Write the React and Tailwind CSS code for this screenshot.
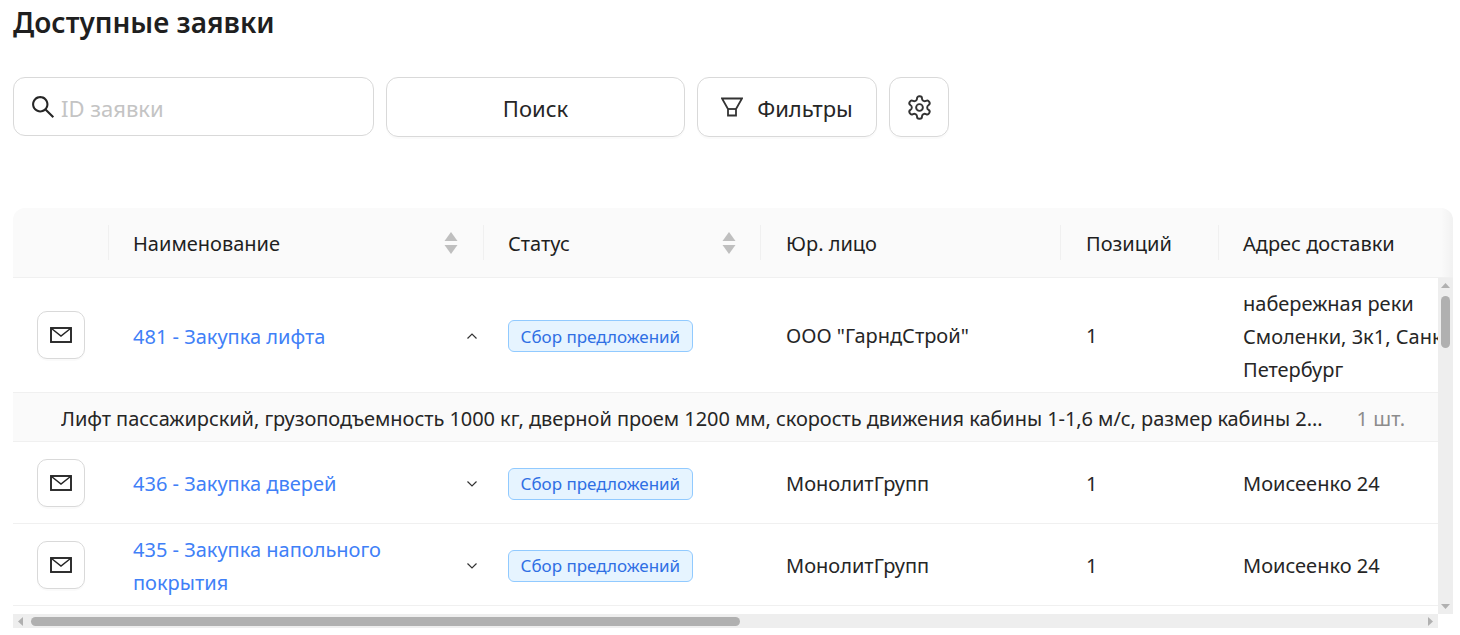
import React from "react";
import { AiOutlineSearch } from "react-icons/ai";
import { LuSettings } from "react-icons/lu";

const cols = "grid grid-cols-[96px_375px_277px_300px_158px_1fr]";

function Mail() {
  return (
    <svg width="22" height="16" viewBox="0 0 22 16" fill="none" stroke="#262626">
      <rect x="1" y="1" width="20" height="14" strokeWidth="1.9" />
      <path d="M1.5 1.5 L11 9 L20.5 1.5" strokeWidth="1.5" />
    </svg>
  );
}

function Sort() {
  return (
    <svg width="14" height="22" viewBox="0 0 14 22" fill="#bfbfbf">
      <path d="M7 0 L13.5 9 L.5 9 Z" />
      <path d="M.5 13 L13.5 13 L7 22 Z" />
    </svg>
  );
}

function Chevron({ up }) {
  return (
    <svg width="12" height="8" viewBox="0 0 12 8" fill="none" stroke="#333" strokeWidth="1.2" className={up ? "" : "rotate-180"}>
      <path d="M1.5 6.5 L6 2 L10.5 6.5" />
    </svg>
  );
}

function Filter() {
  return (
    <svg width="22" height="20" viewBox="0 0 22 20" fill="none" stroke="#333" strokeWidth="1.8">
      <path d="M1 1.5 H21 L15 12 V18.5 H7 V12 Z" />
      <path d="M7 12 H15" />
    </svg>
  );
}

function HeadCell({ label, sort, divider = true, pl = "pl-[24px]", pr = "pr-[26px]" }) {
  return (
    <div className={`relative flex items-center justify-between ${pl} ${pr}`}>
      {divider && <span className="absolute left-[-1px] top-[17px] h-[35px] w-px bg-[#f0f0f0]" />}
      <span className="pt-[2px]">{label}</span>
      {sort && <Sort />}
    </div>
  );
}

function Row({ h, name, up, company, address }) {
  return (
    <div className={`${cols} items-center border-b border-[#f0f0f0]`} style={{ height: h }}>
      <div className="pl-[24px]">
        <button className="flex h-[48px] w-[48px] items-center justify-center rounded-[10px] border border-[#d9d9d9] bg-white shadow-[0_2px_0_rgba(0,0,0,0.02)]">
          <Mail />
        </button>
      </div>
      <div className="flex items-center justify-between pl-[24px] pr-[6px] pt-[2px]">
        <span className="w-[290px] leading-[33px] text-[#4080f7]">{name}</span>
        <span className="flex w-[12px]"><Chevron up={up} /></span>
      </div>
      <div className="pl-[24px] pt-[2px]">
        <span className="inline-flex h-[32px] items-center rounded-[6px] border border-[#91caff] bg-[#e6f4ff] px-[11.5px] pt-[1px] text-[17px] text-[#2f6fe4]">
          Сбор предложений
        </span>
      </div>
      <div className="pl-[25px] pt-[2px] text-[#262626]">{company}</div>
      <div className="pl-[25px] pt-[2px] text-[#262626]">1</div>
      <div className="overflow-hidden whitespace-pre pl-[24px] pt-[2px] leading-[33px] text-[#262626]">{address}</div>
    </div>
  );
}

export default function App() {
  return (
    <div className="h-[635px] w-[1460px] overflow-hidden bg-white text-[20px] text-[#1f1f1f] [font-family:'Noto_Sans',sans-serif]">
      <div className="px-[13px]">
        <h1 className="flex h-[44px] items-center text-[28px] font-semibold">Доступные заявки</h1>

        <div className="mt-[33px] flex gap-[12px] text-[22px] text-[#262626]">
          <div className="flex h-[59px] w-[361px] items-center rounded-[12px] border border-[#d9d9d9] pl-[15px]">
            <AiOutlineSearch className="h-[28px] w-[28px] text-[#262626]" />
            <span className="ml-[4px] pt-[4px] text-[#c4c4c4]">ID заявки</span>
          </div>
          <button className="flex h-[60px] w-[299px] items-center justify-center rounded-[12px] border border-[#d9d9d9] shadow-[0_2px_0_rgba(0,0,0,0.02)]">
            <span className="pt-[2px]">Поиск</span>
          </button>
          <button className="flex h-[60px] w-[180px] items-center justify-center gap-[14px] rounded-[12px] border border-[#d9d9d9] shadow-[0_2px_0_rgba(0,0,0,0.02)]">
            <Filter />
            <span className="pt-[2px]">Фильтры</span>
          </button>
          <button className="flex h-[60px] w-[60px] items-center justify-center rounded-[12px] border border-[#d9d9d9] shadow-[0_2px_0_rgba(0,0,0,0.02)]">
            <LuSettings className="h-[27px] w-[27px] text-[#333]" strokeWidth={1.7} />
          </button>
        </div>

        <div className="mt-[71px] w-[1440px]">
          <div className={`${cols} relative h-[70px] overflow-hidden rounded-t-[12px] border-b border-[#f0f0f0] bg-[#fafafa]`}>
            <HeadCell label="" divider={false} />
            <HeadCell label="Наименование" sort />
            <HeadCell label="Статус" sort pr="pr-[25px]" />
            <HeadCell label="Юр. лицо" pl="pl-[25px]" />
            <HeadCell label="Позиций" pl="pl-[25px]" />
            <HeadCell label="Адрес доставки" />
            <span className="absolute right-0 top-0 h-full w-[12px] bg-gradient-to-r from-transparent to-black/[0.035]" />
          </div>

          <div className="flex h-[336px]">
            <div className="w-[1425px] overflow-hidden">
              <Row h={115} name="481 - Закупка лифта" up company='ООО "ГарндСтрой"' address={"набережная реки\nСмоленки, 3к1, Санкт-\nПетербург"} />
              <div className="flex h-[49px] items-center justify-between border-b border-[#f0f0f0] bg-[#fafafa] pl-[48px] pr-[33px] pt-[3px]">
                <span className="w-[1265px] truncate tracking-[-0.06px] text-[#262626]">
                  Лифт пассажирский, грузоподъемность 1000 кг, дверной проем 1200 мм, скорость движения кабины 1-1,6 м/с, размер кабины 2100х1100 мм
                </span>
                <span className="text-[#8c8c8c]">1 шт.</span>
              </div>
              <Row h={82} name="436 - Закупка дверей" company="МонолитГрупп" address="Моисеенко 24" />
              <Row h={82} name="435 - Закупка напольного покрытия" company="МонолитГрупп" address="Моисеенко 24" />
            </div>
            <div className="flex w-[15px] flex-col items-center bg-[#eeeeee] py-[5px]">
              <svg width="9" height="5" viewBox="0 0 9 5" fill="#b0b0b0"><path d="M4.5 0 L9 5 H0 Z" /></svg>
              <div className="mt-[8px] h-[52px] w-[9px] rounded-full bg-[#b0b0b0]" />
              <svg width="9" height="5" viewBox="0 0 9 5" fill="#b0b0b0" className="mt-auto"><path d="M0 0 H9 L4.5 5 Z" /></svg>
            </div>
          </div>

          <div className="flex h-[14px] w-[1425px] items-center bg-[#eeeeee] px-[5px]">
            <svg width="5" height="9" viewBox="0 0 5 9" fill="#b0b0b0"><path d="M5 0 V9 L0 4.5 Z" /></svg>
            <div className="ml-[8px] h-[9px] w-[709px] rounded-full bg-[#b0b0b0]" />
            <svg width="5" height="9" viewBox="0 0 5 9" fill="#b0b0b0" className="ml-auto"><path d="M0 0 V9 L5 4.5 Z" /></svg>
          </div>
        </div>
      </div>
    </div>
  );
}
